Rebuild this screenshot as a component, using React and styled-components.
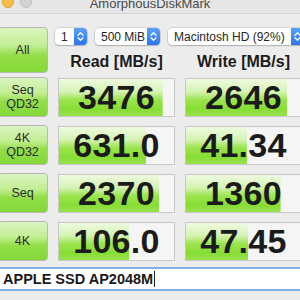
import React from "react";
import styled, { createGlobalStyle } from "styled-components";

const GlobalStyle = createGlobalStyle`
  body {
    margin: 0;
  }
`;

const Window = styled.div`
  width: 300px;
  height: 300px;
  overflow: hidden;
  background: #ececec;
  font-family: "Liberation Sans", Arial, sans-serif;
`;

const TitleBar = styled.div`
  height: 13px;
  background: #e6e6e6;
  border-bottom: 1px solid #d2d2d2;
  display: grid;
  grid-template-columns: 1fr auto 1fr;
  align-items: start;
  overflow: hidden;
`;

const Lights = styled.div`
  display: flex;
  gap: 6px;
  margin: -4px 0 0 2px;
`;

const Light = styled.div`
  width: 12px;
  height: 12px;
  border-radius: 50%;
  box-sizing: border-box;
  background: ${p => p.$color};
  border: 0.5px solid ${p => p.$edge};
`;

const Title = styled.div`
  font-size: 13px;
  line-height: 14px;
  margin-top: -3px;
  color: #4b4b4b;
`;

const Grid = styled.div`
  margin: 13px 0 0 -3px;
  display: grid;
  grid-template-columns: 51px 117px 117px;
  grid-template-rows: 42px repeat(4, 40px);
  column-gap: 10px;
  row-gap: 8px;
`;

const SideButton = styled.div`
  box-sizing: border-box;
  border: 1px solid #b7b7b7;
  border-radius: 4px;
  background: linear-gradient(to bottom, #daf5c0 0%, #c2ee93 40%, #93de48 62%, #84d938 100%);
  display: flex;
  align-items: center;
  justify-content: center;
  text-align: center;
  font-size: 12.5px;
  line-height: 14px;
  color: #2a2a2a;
  margin-bottom: ${p => (p.$tall ? "-4px" : "0")};
`;

const Header = styled.div`
  grid-column: 2 / 4;
  display: flex;
  flex-direction: column;
`;

const Selects = styled.div`
  display: flex;
  gap: 8px;
  margin: 1px 0 0 -3px;
`;

const Select = styled.div`
  display: flex;
  align-items: center;
  flex: none;
  width: ${p => p.$w}px;
  height: 17px;
  background: #fff;
  border-radius: 4px;
  overflow: hidden;
  box-shadow: 0 0 0 0.5px rgba(0, 0, 0, 0.2), 0 1px 1.5px rgba(0, 0, 0, 0.18);
  font-size: 12px;
  color: #262626;
`;

const SelectText = styled.span`
  flex: 1;
  padding-left: 6px;
  white-space: nowrap;
`;

const Stepper = styled.div`
  width: 13px;
  height: 100%;
  background: linear-gradient(to bottom, #5aa1f9, #2b76ef);
  display: flex;
  align-items: center;
  justify-content: center;
`;

const Labels = styled.div`
  display: grid;
  grid-template-columns: 117px 117px;
  column-gap: 10px;
  margin-top: 7px;
`;

const Label = styled.div`
  text-align: center;
  font-size: 16px;
  line-height: 20px;
  font-weight: bold;
  color: #1c1c1c;
`;

const ValueBox = styled.div`
  box-sizing: border-box;
  border: 1px solid #c7c7c7;
  background-color: #f5f5f5;
  background-image: linear-gradient(to bottom, #eefae2 0%, #d4f3b2 35%, #9be54f 56%, #86dd33 82%, #98e352 100%);
  background-repeat: no-repeat;
  display: flex;
  align-items: center;
  justify-content: center;
  font-size: 34px;
  font-weight: bold;
  letter-spacing: 0.3px;
  color: #1b1b1b;
  margin-top: 1px;
`;

const Field = styled.div`
  margin: 6px -6px 0 -6px;
  height: 20px;
  background: #fff;
  border-top: 2px solid #86aee9;
  border-bottom: 2px solid #86aee9;
  display: flex;
  align-items: center;
  padding-left: 9px;
  font-size: 14.5px;
  font-weight: bold;
  color: #1a1a1a;
`;

const Caret = styled.span`
  width: 1px;
  height: 16px;
  background: #222;
  margin-left: 1px;
`;

const Chevrons = () => (
  <svg width="7" height="11" viewBox="0 0 7 11">
    <path d="M1 4.3 L3.5 1.8 L6 4.3 M1 6.7 L3.5 9.2 L6 6.7" stroke="#fff" strokeWidth="1.3" fill="none" strokeLinecap="round" strokeLinejoin="round" />
  </svg>
);

const rows = [
  { label: ["Seq", "QD32"], read: "3476", write: "2646" },
  { label: ["4K", "QD32"], read: "631.0", write: "41.34" },
  { label: ["Seq"], read: "2370", write: "1360" },
  { label: ["4K"], read: "106.0", write: "47.45" },
];

// bars are on a log scale
const fill = v => Math.min(100, Math.log10(parseFloat(v)) * 19.3 + 21.8);

const Value = ({ v }) => (
  <ValueBox style={{ backgroundSize: `${fill(v)}% 100%` }}>{v}</ValueBox>
);

export default function App() {
  return (
    <Window>
      <GlobalStyle />
      <TitleBar>
        <Lights>
          <Light $color="#f7bd45" $edge="#dea236" />
          <Light $color="#d3d3d3" $edge="#c2c2c2" />
        </Lights>
        <Title>AmorphousDiskMark</Title>
        <div />
      </TitleBar>
      <Grid>
        <SideButton $tall>All</SideButton>
        <Header>
          <Selects>
            <Select $w={32}>
              <SelectText>1</SelectText>
              <Stepper><Chevrons /></Stepper>
            </Select>
            <Select $w={65}>
              <SelectText>500 MiB</SelectText>
              <Stepper><Chevrons /></Stepper>
            </Select>
            <Select $w={136}>
              <SelectText>Macintosh HD (92%)</SelectText>
              <Stepper><Chevrons /></Stepper>
            </Select>
          </Selects>
          <Labels>
            <Label>Read [MB/s]</Label>
            <Label>Write [MB/s]</Label>
          </Labels>
        </Header>
        {rows.map(r => (
          <React.Fragment key={r.label.join() + r.read}>
            <SideButton>
              <div>
                {r.label.map(l => <div key={l}>{l}</div>)}
              </div>
            </SideButton>
            <Value v={r.read} />
            <Value v={r.write} />
          </React.Fragment>
        ))}
      </Grid>
      <Field>
        APPLE SSD AP2048M
        <Caret />
      </Field>
    </Window>
  );
}
